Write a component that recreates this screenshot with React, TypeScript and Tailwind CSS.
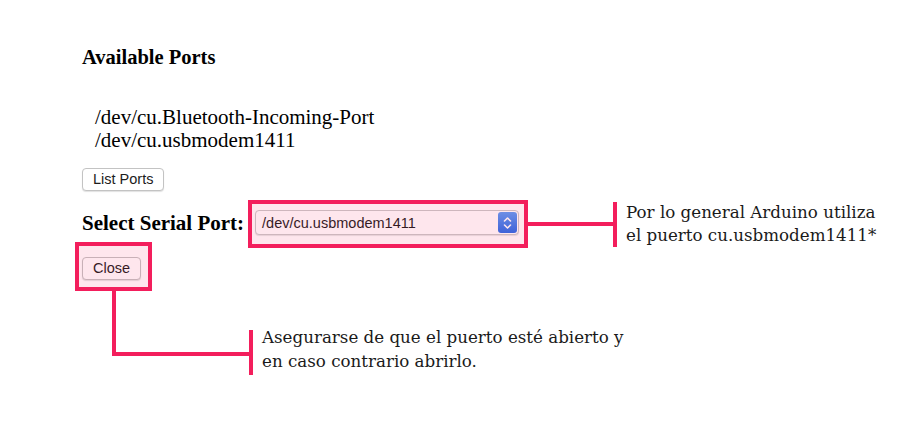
import React from "react";

function MacButton({ children }: { children: React.ReactNode }) {
  return (
    <button className="h-[23px] px-[10px] rounded-[4px] border border-[#c3c3c3] bg-white text-[14.5px] leading-[20px] text-[#1c1c1c] shadow-[0_1px_1px_rgba(0,0,0,0.12)] font-['Liberation_Sans',Arial,sans-serif]">
      {children}
    </button>
  );
}

export default function App() {
  return (
    <div className="relative w-[904px] h-[435px] bg-white overflow-hidden">
      {/* page content */}
      <div className="flex flex-col items-start pl-[82px] pt-[45px] text-black font-['Liberation_Serif','Times_New_Roman',serif]">
        <h3 className="text-[20.5px] leading-[24px] font-bold">Available Ports</h3>
        <ul className="mt-[37px] pl-[13px] text-[21px] leading-[23px]">
          <li>/dev/cu.Bluetooth-Incoming-Port</li>
          <li>/dev/cu.usbmodem1411</li>
        </ul>
        <div className="mt-[15px]">
          <MacButton>List Ports</MacButton>
        </div>
        <div className="mt-[19px] flex items-center gap-[11px] h-[25px]">
          <span className="text-[21px] leading-[24px] font-bold mt-[1px]">Select Serial Port:</span>
          <div className="w-[264px] h-[25px] flex items-center rounded-[4px] border border-[#c9c9c9] bg-white shadow-[0_1px_1px_rgba(0,0,0,0.1)] font-['Liberation_Sans',Arial,sans-serif]">
            <span className="flex-1 pl-[6px] text-[14.5px] leading-[20px] text-[#1c1c1c]">
              /dev/cu.usbmodem1411
            </span>
            <div className="mr-[1px] w-[19px] h-[21px] rounded-[3px] bg-gradient-to-b from-[#5c9cf6] to-[#2a6be8] flex items-center justify-center">
              <svg width="9" height="14" viewBox="0 0 9 14" fill="none">
                <path d="M1.5 5 L4.5 2 L7.5 5" stroke="white" strokeWidth="1.6" strokeLinecap="round" strokeLinejoin="round" />
                <path d="M1.5 9 L4.5 12 L7.5 9" stroke="white" strokeWidth="1.6" strokeLinecap="round" strokeLinejoin="round" />
              </svg>
            </div>
          </div>
        </div>
        <div className="mt-[21px]">
          <MacButton>Close</MacButton>
        </div>
      </div>

      {/* callout 1: serial port select */}
      <div className="absolute left-[248px] top-[200px] flex items-center">
        <div className="w-[280px] h-[48px] border-4 border-[#f31e5c] bg-[rgba(243,30,92,0.11)]" />
        <div className="w-[85px] h-[4px] bg-[#f31e5c]" />
        <div className="w-[4px] h-[45px] bg-[#f31e5c]" />
        <p className="ml-[9px] text-[16.7px] leading-[23px] text-[#1a1a1a] font-['DejaVu_Serif',Georgia,serif]">
          Por lo general Arduino utiliza
          <br />
          el puerto cu.usbmodem1411*
        </p>
      </div>

      {/* callout 2: close button */}
      <div className="absolute left-[75px] top-[242px] flex flex-col items-start">
        <div className="w-[77px] h-[49px] border-4 border-[#f31e5c] bg-[rgba(243,30,92,0.11)]" />
        <div className="ml-[37px] flex items-start">
          <div className="w-[141px] h-[65px] border-l-4 border-b-4 border-[#f31e5c]" />
          <div className="-ml-[4px] mt-[39px] w-[4px] h-[45px] bg-[#f31e5c]" />
          <p className="ml-[9px] mt-[34px] text-[16.7px] leading-[24px] text-[#1a1a1a] font-['DejaVu_Serif',Georgia,serif]">
            Asegurarse de que el puerto esté abierto y
            <br />
            en caso contrario abrirlo.
          </p>
        </div>
      </div>
    </div>
  );
}
